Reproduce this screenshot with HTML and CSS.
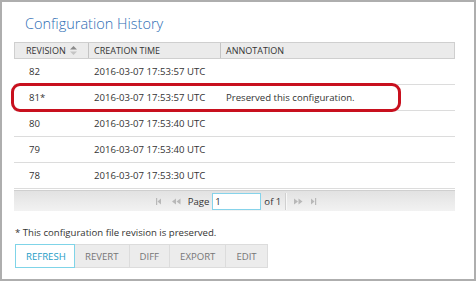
FILE: index.html
```html
<!DOCTYPE html>
<html>
<head>
<meta charset="utf-8">
<link rel="stylesheet" href="styles.css">
</head>
<body>
<div class="frame">
  <h1 class="title">Configuration History</h1>
  <div class="grid">
    <div class="head">
      <div class="hcell">REVISION
        <svg class="sort" width="7" height="9" viewBox="0 0 7 9"><path d="M3.5 0 L7 3.5 H0 Z" fill="#8a8a8a"/><path d="M0 5.5 H7 L3.5 9 Z" fill="#c4c4c4"/></svg>
      </div>
      <div class="hcell">CREATION TIME</div>
      <div class="hcell">ANNOTATION</div>
    </div>
    <div class="row"><div class="cell c1">82</div><div class="cell">2016-03-07 17:53:57 UTC</div><div class="cell"></div></div>
    <div class="row hl"><div class="cell c1">81*</div><div class="cell">2016-03-07 17:53:57 UTC</div><div class="cell">Preserved this configuration.</div><div class="mark"></div></div>
    <div class="row"><div class="cell c1">80</div><div class="cell">2016-03-07 17:53:40 UTC</div><div class="cell"></div></div>
    <div class="row"><div class="cell c1">79</div><div class="cell">2016-03-07 17:53:40 UTC</div><div class="cell"></div></div>
    <div class="row"><div class="cell c1">78</div><div class="cell">2016-03-07 17:53:30 UTC</div><div class="cell"></div></div>
    <div class="pager">
      <svg class="pi" width="8" height="7" viewBox="0 0 8 7"><rect x="0" y="0" width="1.2" height="7" fill="#b8b8b8"/><path d="M1.5 3.5 L5 0.5 V6.5 Z" fill="#b8b8b8"/></svg>
      <svg class="pi" width="9" height="7" viewBox="0 0 9 7"><path d="M0 3.5 L4 0.5 V6.5 Z M4.5 3.5 L8.5 0.5 V6.5 Z" fill="#b8b8b8"/></svg>
      <span class="plabel">Page</span>
      <span class="pinput">1</span>
      <span class="plabel">of 1</span>
      <span class="psep"></span>
      <svg class="pi" width="9" height="7" viewBox="0 0 9 7"><path d="M0 0.5 L4 3.5 L0 6.5 Z M4.5 0.5 L8.5 3.5 L4.5 6.5 Z" fill="#b8b8b8"/></svg>
      <svg class="pi" width="8" height="7" viewBox="0 0 8 7"><path d="M0 0.5 L3.5 3.5 L0 6.5 Z" fill="#b8b8b8"/><rect x="4" y="0" width="1.2" height="7" fill="#b8b8b8"/></svg>
    </div>
  </div>
  <p class="note">* This configuration file revision is preserved.</p>
  <div class="buttons">
    <button class="btn active">REFRESH</button><button class="btn">REVERT</button><button class="btn">DIFF</button><button class="btn">EXPORT</button><button class="btn">EDIT</button>
  </div>
</div>
</body>
</html>
```
FILE: styles.css
```css
html, body {
  margin: 0;
  padding: 0;
  background: #fff;
}
.frame {
  box-sizing: border-box;
  width: 476px;
  height: 281px;
  border: 2px solid #aeaeae;
  padding: 12px 19px 0 12px;
  font-family: "Open Sans", "Liberation Sans", sans-serif;
  color: #333;
}
.title {
  margin: 0 0 8px 11px;
  font-size: 14.5px;
  line-height: 20px;
  font-weight: 300;
  color: #2e6db4;
}
.grid {
  width: 441px;
}
.head, .row {
  display: grid;
  grid-template-columns: 73px 132px 1fr;
}
.head {
  height: 17px;
  background: #ebebeb;
  border: 1px solid #cfcfcf;
  box-sizing: border-box;
}
.hcell {
  display: flex;
  align-items: center;
  gap: 4px;
  padding-left: 5px;
  font-size: 9px;
  color: #333;
  border-left: 1px solid #c4c4c4;
}
.hcell:first-child {
  border-left: none;
  padding-left: 11px;
}
.row {
  position: relative;
  height: 26px;
  border-bottom: 1px solid #dcdcdc;
  box-sizing: border-box;
}
.cell {
  display: flex;
  align-items: center;
  padding-left: 7px;
  font-size: 9.6px;
  color: #333;
}
.cell.c1 {
  padding-left: 15px;
}
.mark {
  position: absolute;
  left: -3px;
  top: -2px;
  width: 390px;
  height: 29px;
  box-sizing: border-box;
  border: 3px solid #c8101e;
  border-radius: 9px;
}
.pager {
  display: flex;
  align-items: center;
  justify-content: center;
  height: 21px;
  margin-top: 1px;
  background: linear-gradient(#e2e2e2, #f2f2f2);
  border-top: 1px solid #cfcfcf;
  box-sizing: border-box;
  padding-left: 6px;
}
.pi {
  margin: 0 4px;
}
.plabel {
  font-size: 9.6px;
  color: #333;
  margin: 0 3px;
}
.pinput {
  box-sizing: border-box;
  width: 49px;
  height: 17px;
  background: #fff;
  border: 1px solid #86d3ea;
  font-size: 9.6px;
  line-height: 15px;
  padding-left: 2px;
}
.psep {
  width: 1px;
  height: 17px;
  background: #d0d0d0;
  border-right: 1px solid #f8f8f8;
  margin: 0 3px 0 1px;
}
.note {
  margin: 15px 0 0 1px;
  font-size: 9.6px;
  line-height: 14px;
}
.buttons {
  display: flex;
  margin: 4px 0 0 1px;
}
.btn {
  box-sizing: border-box;
  height: 24px;
  padding: 0 10px;
  margin: 0;
  background: #ececec;
  border: 1px solid #dcdcdc;
  border-left: none;
  font-family: "Open Sans", "Liberation Sans", sans-serif;
  font-size: 9.6px;
  color: #777;
}
.btn.active {
  background: #fff;
  border: 1px solid #7fd4e8;
  color: #1e9dc6;
  width: 60px;
}
```
